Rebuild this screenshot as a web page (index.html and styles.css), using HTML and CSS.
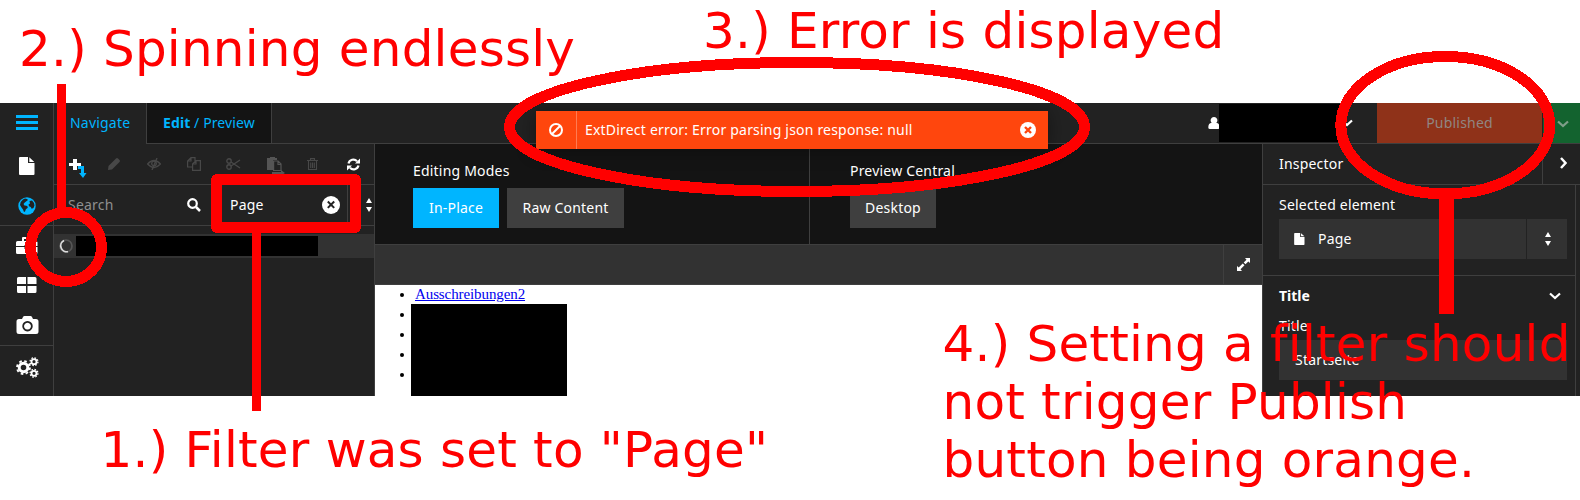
FILE: index.html
```html
<!DOCTYPE html>
<html lang="en">
<head>
<meta charset="utf-8">
<title>Content editor</title>
<link rel="stylesheet" href="styles.css">
</head>
<body>
<svg class="defs" width="0" height="0">
  <symbol id="file" viewBox="0 0 16 18"><path d="M0 1q0-1 1-1h8v6h6.500v11q0 1-1 1H1q-1 0-1-1zM10.300 0.200L15.300 5h-5z"/></symbol>
  <symbol id="sort" viewBox="0 0 6 14"><path d="M3 0l3 5H0zM0 9h6l-3 5z"/></symbol>
  <symbol id="down" viewBox="0 0 12 8"><path d="M1 1.500l5 4.500 5-4.500" fill="none" stroke="currentColor" stroke-width="2.200"/></symbol>
</svg>
<div class="app">
  <nav class="rail">
    <div class="rail-item menu"><svg width="22" height="15"><path d="M0 0h22v3H0zM0 6h22v3H0zM0 12h22v3H0z"/></svg></div>
    <div class="rail-item doc"><svg width="16" height="18"><use href="#file"/></svg></div>
    <div class="rail-item globe"><svg width="18" height="18" viewBox="0 0 18 18"><circle cx="9" cy="9" r="8.700"/><path fill="#222" d="M7 1.500l2 .5 1 1-2 1.500-1.500 1.200L5.500 7l1 1.500 2 .3L10 10l-1 1.500-1 .5-1 2.500-1 .5-1-2.500-1.500-2L2 8l.7-3L5 2.500zM11.500 4l2.500-.5L16 6l.5 2.500-1 2.500-1.800.8-1-1.800-1.700-.8-.5-1.700 1.500-1z"/></svg></div>
    <div class="rail-item"><svg width="22" height="18" viewBox="0 0 22 18"><path d="M6 4V1q0-1 1-1h7q1 0 1 1v3h5q1.500 0 1.500 1.500V9h-8V8h-5v1H0V5.500Q0 4 1.500 4zM8 2v2h5V2zM0 10h8.500v2h5v-2h8v5.500q0 1.500-1.500 1.500H1.500Q0 17 0 15.500z"/></svg></div>
    <div class="rail-item grid"><svg width="20" height="16"><path d="M1.500 0H9v7H0V1.500Q0 0 1.500 0zM10.500 0h7.500q1.500 0 1.500 1.500V7h-9zM0 9h9v7H1.500Q0 16 0 14.500zM10.500 9h9v5.500q0 1.500-1.500 1.500h-7.500z"/></svg></div>
    <div class="rail-item camera"><svg width="23" height="18" viewBox="0 0 23 18"><path fill-rule="evenodd" d="M6 3l1-2q.5-1 1.500-1h6q1 0 1.500 1l1 2h3q2.500 0 2.500 2.500v10q0 2.500-2.500 2.500H3Q.5 18 .5 15.500v-10Q.5 3 3 3zM11.500 5a5.200 5.200 0 1 0 .01 0zM11.500 6.800a3.400 3.400 0 1 1-.01 0z"/></svg></div>
    <div class="rail-item last"><svg width="23" height="21" viewBox="0 0 23 21" fill="none" stroke="currentColor"><circle cx="7.500" cy="10.500" r="4.300" stroke-width="3"/><circle cx="7.500" cy="10.500" r="6.500" stroke-width="1.800" stroke-dasharray="2.600 2.500"/><circle cx="18" cy="4.700" r="2.500" stroke-width="1.800"/><circle cx="18" cy="4.700" r="3.900" stroke-width="1.300" stroke-dasharray="1.600 1.460"/><circle cx="18" cy="16.300" r="2.500" stroke-width="1.800"/><circle cx="18" cy="16.300" r="3.900" stroke-width="1.300" stroke-dasharray="1.600 1.460"/></svg></div>
  </nav>
  <div class="main">
    <header class="topbar">
      <div class="tab">Navigate</div>
      <div class="tab active"><b>Edit</b> / Preview</div>
      <div class="bar-fill"></div>
      <div class="user">
        <svg width="12" height="12"><path d="M6 0a3.300 3.300 0 0 1 2.300 5.700Q11.500 6 11.500 10.500 11.500 12 10 12H2Q.3 12 .3 10.500.3 6 3.700 5.700A3.300 3.300 0 0 1 6 0z"/></svg>
        <div class="redacted name"></div>
        <svg width="12" height="8"><use href="#down"/></svg>
      </div>
      <div class="publish">Published</div>
      <div class="publish-more"><svg width="12" height="8"><use href="#down"/></svg></div>
    </header>
    <div class="columns">
      <aside class="tree">
        <div class="tools">
          <svg class="on add" width="18" height="20"><path d="M4 1h4v4h4v3H8v4H4V8H0V5h4z"/><path fill="#00b5ff" d="M9 8h6v7h2.500L14 20l-4-5h2v-4H9z"/></svg>
          <svg class="pencil" width="12" height="12"><path d="M0 12l.5-4L8 .5Q9-.3 10 .5L11.500 2q.8 1 0 2L4 11.500z"/></svg>
          <svg class="eye" width="14" height="12" fill="none" stroke="currentColor" stroke-width="1.300"><path d="M.6 6Q7-1 13.400 6 7 13 .6 6z"/><circle cx="7" cy="5.500" r="2.300"/><path d="M10 0L5 12"/></svg>
          <svg class="copy" width="14" height="14" fill="none" stroke="currentColor" stroke-width="1.200"><path d="M5 10H.6V4L4 .6h4V4M4 .6V4H.6M5.600 7L9 3.600h4.400v9.800H5.600zM9 3.600V7H5.600"/></svg>
          <svg class="cut" width="15" height="12" fill="none" stroke="currentColor" stroke-width="1.400"><circle cx="3" cy="3" r="2.200"/><circle cx="3" cy="9" r="2.200"/><path d="M5 4l9 6M5 8l9-6"/></svg>
          <svg class="paste" width="18" height="18"><path d="M0 1h3V0h5v1h2v2H6v10H0z"/><path d="M6.600 4h4.500L14 7v6.500H6.600zM11 4v3.500h3" fill="none" stroke="currentColor" stroke-width="1.200"/><path d="M5 15h9v-2l4 3-4 2.500H5z"/></svg>
          <svg class="trash" width="11" height="12" fill="none" stroke="currentColor" stroke-width="1.100"><path d="M0 2.500h11M3.500 2.500V.6h4v1.900M1.500 2.500v9h8v-9M3.700 4.500v5.500M5.500 4.500v5.500M7.300 4.500v5.500"/></svg>
          <svg class="on refresh" width="13" height="13"><path d="M1.500 5.500A5 5 0 0 1 10 3.200M11.500 7.500A5 5 0 0 1 3 9.800" fill="none" stroke="currentColor" stroke-width="2.200"/><path d="M13 .5V5.500H8zM0 12.500V7.500h5z"/></svg>
        </div>
        <div class="filters">
          <div class="search">Search<svg width="14" height="14"><circle cx="5.500" cy="5.500" r="4.300" fill="none" stroke="currentColor" stroke-width="2.200"/><path d="M9 9l4 4" stroke="currentColor" stroke-width="2.500"/></svg></div>
          <div class="filter">Page<svg width="18" height="18"><circle cx="9" cy="9" r="9"/><path d="M5.800 5.500l6.400 6.400M12.200 5.500L5.800 11.900" stroke="#222" stroke-width="2"/></svg></div>
          <div class="sorter"><svg width="6" height="14"><use href="#sort"/></svg></div>
        </div>
        <div class="node">
          <svg width="14" height="14" fill="none" stroke-width="1.700"><circle cx="7" cy="7" r="6" stroke="#555"/><path d="M9 12.600A6 6 0 0 1 5 1.400" stroke="#ddd"/></svg>
          <div class="redacted label"></div>
        </div>
      </aside>
      <main class="stage">
        <div class="modes">
          <section class="group edit">
            <div class="caption">Editing Modes</div>
            <div class="buttons"><span class="btn primary">In-Place</span><span class="btn wide">Raw Content</span></div>
          </section>
          <section class="group">
            <div class="caption">Preview Central</div>
            <div class="buttons"><span class="btn">Desktop</span></div>
          </section>
        </div>
        <div class="strip"><div class="expand"><svg width="13" height="13"><path d="M8 0h5v5l-1.700-1.500L8.500 6.300 6.700 4.500 9.500 1.700zM0 8l1.700 1.500 4-4 1.800 1.800-4 4L5 13H0z"/></svg></div></div>
        <div class="page">
          <ul class="links"><li><a>Ausschreibungen2</a></li><li></li><li></li><li></li><li></li></ul>
          <div class="redacted block"></div>
        </div>
      </main>
      <aside class="inspector">
        <div class="insp-head"><span>Inspector</span><div class="collapse"><svg width="7" height="12"><path d="M1 1l4.500 5L1 11" fill="none" stroke="currentColor" stroke-width="2.400"/></svg></div></div>
        <div class="insp-body">
          <section class="selected">
            <div class="label-text">Selected element</div>
            <div class="select"><div class="value"><svg width="11" height="12"><use href="#file"/></svg>Page</div><div class="arrow"><svg width="6" height="14"><use href="#sort"/></svg></div></div>
          </section>
          <section class="props">
            <div class="props-head"><b>Title</b><svg width="12" height="8"><use href="#down"/></svg></div>
            <div class="label-text">Title</div>
            <div class="input">Startseite</div>
          </section>
        </div>
      </aside>
    </div>
  </div>
</div>
<div class="toast">
  <div class="toast-icon"><svg width="14" height="14" fill="none" stroke="currentColor" stroke-width="2"><circle cx="7" cy="7" r="6"/><path d="M11 3l-8 8"/></svg></div>
  <div class="toast-text">ExtDirect error: Error parsing json response: null</div>
  <svg width="16" height="16"><circle cx="8" cy="8" r="8"/><path d="M5 5l6 6M11 5l-6 6" stroke="#ff460d" stroke-width="2.400"/></svg>
</div>
<svg class="marks" width="1580" height="500" shape-rendering="crispEdges">
  <ellipse cx="66" cy="247" rx="35.500" ry="34.500"/>
  <ellipse cx="797" cy="127" rx="287.500" ry="64.500"/>
  <ellipse cx="1445.300" cy="125.200" rx="104.500" ry="68.700"/>
  <rect x="216.500" y="179.500" width="139" height="48" rx="0.500"/>
  <path d="M57 84h9v126h-9zM252 230h9v181h-9zM1439 197h15v117h-15z"/>
</svg>
<div class="note one">1.) Filter was set to "Page"</div>
<div class="note two">2.) Spinning endlessly</div>
<div class="note three">3.) Error is displayed</div>
<div class="note four">4.) Setting a filter should<br>not trigger Publish<br>button being orange.</div>
</body>
</html>
```
FILE: styles.css
```css
* { box-sizing: border-box; }
body {
  margin: 0;
  padding-top: 103px;
  width: 1580px;
  height: 500px;
  overflow: hidden;
  position: relative;
  background: #fff;
  color: #fff;
  font: 14px/20px "Noto Sans", sans-serif;
  letter-spacing: .2px;
}
svg { display: block; flex: none; }
svg:not([fill]) { fill: currentColor; }
.defs { position: absolute; }
.redacted { background: #000; }
.app { display: flex; height: 293px; background: #222; }

.rail { width: 54px; border-right: 1px solid #3f3f3f; flex: none; }
.rail-item { height: 40px; padding-left: 1px; display: flex; align-items: center; justify-content: center; }
.rail-item.menu { height: 41px; padding-bottom: 2px; color: #00b5ff; }
.rail-item.doc { padding-top: 3px; }
.rail-item.globe { height: 42px; padding-top: 2px; color: #00b5ff; border-bottom: 1px solid #3f3f3f; }
.rail-item.grid, .rail-item.camera { padding-bottom: 2px; }
.rail-item.camera { padding-left: 2px; }
.rail-item.last { height: 47px; margin-top: -1px; padding: 0 0 3px 2px; border-top: 1px solid #3f3f3f; }

.main { flex: 1; display: flex; flex-direction: column; min-width: 0; }
.topbar { display: flex; height: 41px; }
.tab { width: 92px; padding: 10px 16px; color: #00b5ff; white-space: nowrap; }
.tab.active { width: 126px; background: #141414; border: solid #3f3f3f; border-width: 0 1px 1px; letter-spacing: .1px; }
.bar-fill { flex: 1; border-bottom: 1px solid #3f3f3f; }
.user { width: 169px; display: flex; align-items: center; border-bottom: 1px solid #3f3f3f; }
.name { width: 121px; height: 38px; margin-left: -1px; }
.user svg:last-child { margin-left: 1px; }
.publish { width: 165px; margin-right: 1px; text-align: center; padding: 10px 0; background: #8f3219; color: #918682; border-bottom: 1px solid #3f3f3f; }
.publish-more { width: 37px; padding: 17px 0 0 14px; background: #13632f; color: #7f9e89; border-bottom: 1px solid #3f3f3f; }

.columns { flex: 1; display: flex; min-height: 0; }
.tree { width: 321px; border-right: 1px solid #3f3f3f; }
.tools { height: 41px; display: flex; align-items: center; padding-left: 15px; border-bottom: 1px solid #3f3f3f; color: #484848; }
.tools .on { color: #fff; }
.add { margin-top: 8px; }
.pencil { margin-left: 21px; }
.eye { margin-left: 27px; }
.copy { margin-left: 26px; }
.cut { margin-left: 25px; }
.paste { margin: 4px 0 0 26px; color: #555; }
.trash { margin-left: 22px; }
.refresh { margin-left: 29px; }
.filters { height: 41px; display: flex; align-items: center; border-bottom: 1px solid #3f3f3f; }
.search { width: 159px; display: flex; align-items: center; justify-content: space-between; padding: 0 12px 0 14px; color: #8f8f8f; }
.search svg { color: #fff; }
.filter { width: 135px; height: 40px; display: flex; align-items: center; justify-content: space-between; padding: 0 7px 0 17px; border-right: 1px solid #3f3f3f; }
.sorter { padding-left: 18px; }
.node { margin-top: 8px; height: 24px; display: flex; align-items: center; padding-left: 5px; background: #323232; }
.label { width: 242px; height: 20px; margin-left: 3px; }

.stage { width: 887px; display: flex; flex-direction: column; }
.modes { height: 101px; display: flex; background: #141414; border-bottom: 1px solid #3f3f3f; }
.group { padding: 17px 0 0 40px; }
.group.edit { width: 435px; padding-left: 38px; border-right: 1px solid #3f3f3f; }
.buttons { display: flex; gap: 8px; margin-top: 7px; }
.btn { width: 86px; height: 40px; padding: 10px 0; text-align: center; background: #3f3f3f; }
.btn.wide { width: 117px; }
.btn.primary { background: #00b5ff; }
.strip { height: 40px; display: flex; justify-content: flex-end; background: #323232; border-bottom: 1px solid #3f3f3f; }
.expand { width: 39px; border-left: 1px solid #3f3f3f; display: flex; align-items: center; justify-content: center; }
.page { flex: 1; position: relative; background: #fff; color: #000; font: 15px/19px "Liberation Serif", serif; letter-spacing: -.1px; }
.links { margin: 0; padding-left: 40px; }
.links li { height: 20px; }
.links a { color: #00e; text-decoration: underline; }
.block { position: absolute; left: 36px; top: 19px; width: 156px; height: 92px; }

.inspector { width: 318px; border-left: 1px solid #3f3f3f; }
.insp-head { height: 41px; display: flex; justify-content: space-between; padding-left: 16px; border-bottom: 1px solid #3f3f3f; line-height: 39px; }
.collapse { width: 38px; padding: 13px 0 0 17px; border-left: 1px solid #3f3f3f; }
.insp-body { width: 313px; height: 211px; border-right: 1px solid #3f3f3f; }
.selected { height: 91px; padding: 10px 8px 0 16px; border-bottom: 1px solid #3f3f3f; }
.select { display: flex; gap: 1px; height: 40px; margin-top: 4px; }
.value { flex: 1; display: flex; align-items: center; gap: 13px; padding-left: 15px; background: #323232; }
.arrow { width: 40px; padding-left: 1px; display: flex; align-items: center; justify-content: center; background: #323232; }
.props { padding: 10px 8px 0 16px; }
.props-head { display: flex; align-items: center; justify-content: space-between; padding-right: 6px; margin-bottom: 10px; }
.props-head b { letter-spacing: 0; }
.input { height: 40px; margin-top: 4px; padding: 10px 16px; background: #323232; }

.toast { position: absolute; left: 536px; top: 111px; width: 512px; height: 38px; display: flex; align-items: center; padding-right: 12px; background: #ff460d; box-shadow: 0 0 20px rgba(0, 0, 0, .4); clip-path: inset(-8px -24px -24px); }
.toast-icon { width: 41px; height: 38px; padding-left: 13px; display: flex; align-items: center; border-right: 1px solid #ff7b52; }
.toast-text { flex: 1; padding-left: 8px; }

svg.marks { position: absolute; left: 0; top: 0; fill: none; stroke: #f00; stroke-width: 11; }
.marks path { fill: #f00; stroke: none; }
.note { position: absolute; color: #f00; font: 50px/58px "DejaVu Sans", sans-serif; letter-spacing: .21px; white-space: nowrap; }
.one { left: 100.500px; top: 421px; }
.two { left: 19px; top: 20px; }
.three { left: 703px; top: 2px; }
.four { left: 942.500px; top: 315px; }
```
